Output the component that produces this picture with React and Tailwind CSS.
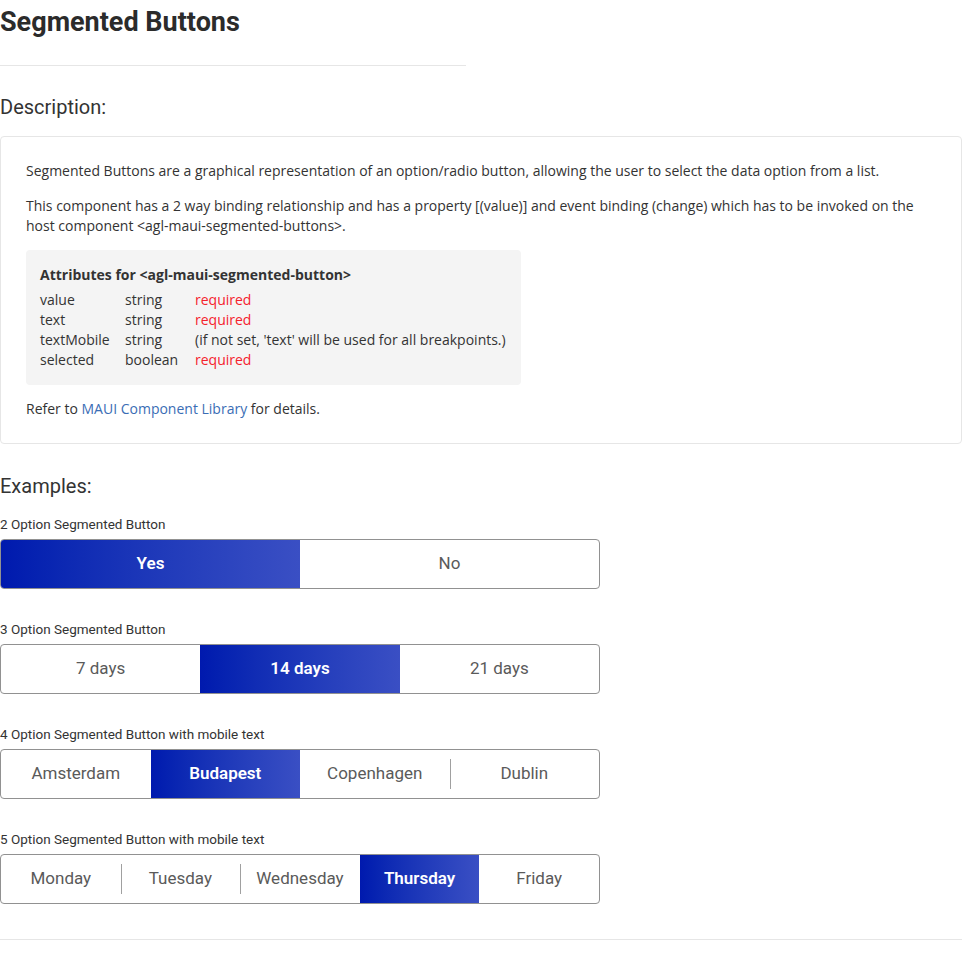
import React, { useState } from 'react';

const heading = "font-['Roboto',sans-serif]";
const body = "font-['Open_Sans',sans-serif]";

const attributes = [
  { name: 'value', type: 'string', note: 'required', req: true },
  { name: 'text', type: 'string', note: 'required', req: true },
  { name: 'textMobile', type: 'string', note: "(if not set, 'text' will be used for all breakpoints.)", req: false },
  { name: 'selected', type: 'boolean', note: 'required', req: true },
];

const examples = [
  { label: '2 Option Segmented Button', options: ['Yes', 'No'], selected: 0 },
  { label: '3 Option Segmented Button', options: ['7 days', '14 days', '21 days'], selected: 1 },
  { label: '4 Option Segmented Button with mobile text', options: ['Amsterdam', 'Budapest', 'Copenhagen', 'Dublin'], selected: 1 },
  { label: '5 Option Segmented Button with mobile text', options: ['Monday', 'Tuesday', 'Wednesday', 'Thursday', 'Friday'], selected: 3 },
];

function SegmentedButtons({ options, initial }) {
  const [value, setValue] = useState(initial);

  return (
    <div className="flex h-[50px] w-[600px] overflow-hidden rounded-[4px] border border-[#919191] bg-white">
      {options.map((opt, i) => {
        const active = i === value;
        // divider only between two unselected neighbours
        const showDivider = i > 0 && !active && i - 1 !== value;
        return (
          <button
            key={opt}
            type="button"
            onClick={() => setValue(i)}
            className={`relative flex flex-1 items-center justify-center text-[17px] ${heading} ${
              active
                ? 'bg-gradient-to-r from-[#0019ae] to-[#3a4fc4] font-semibold text-white'
                : 'text-[#5a5a5a]'
            }`}
          >
            {showDivider && (
              <span className="absolute left-0 top-[9px] h-[30px] w-px bg-[#a0a0a0]" />
            )}
            {opt}
          </button>
        );
      })}
    </div>
  );
}

export default function App() {
  return (
    <div className="min-h-screen w-[962px] bg-white text-[#333]">
      {/* title */}
      <h1 className={`${heading} pt-[4px] text-[27px] font-bold leading-[36px] text-[#2b2b2b]`}>
        Segmented Buttons
      </h1>
      <div className="mt-[25px] h-px w-[466px] bg-[#e6e6e6]" />

      {/* description */}
      <h2 className={`${heading} mt-[27px] text-[20px] leading-[28px] text-[#333]`}>Description:</h2>
      <div className={`${body} mt-[15px] rounded-[4px] border border-[#e6e6e6] px-[25px] pb-[24px] pt-[24px] text-[14px] leading-[20px] text-[#333]`}>
        <p>
          Segmented Buttons are a graphical representation of an option/radio button, allowing the user to select the data option from a list.
        </p>
        <p className="mt-[15px]">
          This component has a 2 way binding relationship and has a property [(value)] and event binding (change) which has to be invoked on the host component &lt;agl-maui-segmented-buttons&gt;.
        </p>

        <div className="mt-[14px] w-[495px] rounded-[4px] bg-[#f4f4f4] px-[14px] pb-[15px] pt-[15px]">
          <div className="font-bold leading-[20px]">Attributes for &lt;agl-maui-segmented-button&gt;</div>
          <div className="mt-[5px]">
            {attributes.map((a) => (
              <div key={a.name} className="flex leading-[20px]">
                <span className="w-[85px]">{a.name}</span>
                <span className="w-[70px]">{a.type}</span>
                <span className={a.req ? 'text-[#f5222d]' : ''}>{a.note}</span>
              </div>
            ))}
          </div>
        </div>

        <p className="mt-[14px]">
          Refer to <a href="#" className="text-[#3a6db5]">MAUI Component Library</a> for details.
        </p>
      </div>

      {/* examples */}
      <h2 className={`${heading} mt-[28px] text-[20px] leading-[28px] text-[#333]`}>Examples:</h2>
      <div className="mt-[15px] flex flex-col gap-[31px]">
        {examples.map((ex) => (
          <div key={ex.label}>
            <div className={`${heading} mb-[6px] text-[13.5px] leading-[18px] text-[#333]`}>{ex.label}</div>
            <SegmentedButtons options={ex.options} initial={ex.selected} />
          </div>
        ))}
      </div>

      <div className="mt-[35px] h-px w-full bg-[#e6e6e6]" />
    </div>
  );
}
